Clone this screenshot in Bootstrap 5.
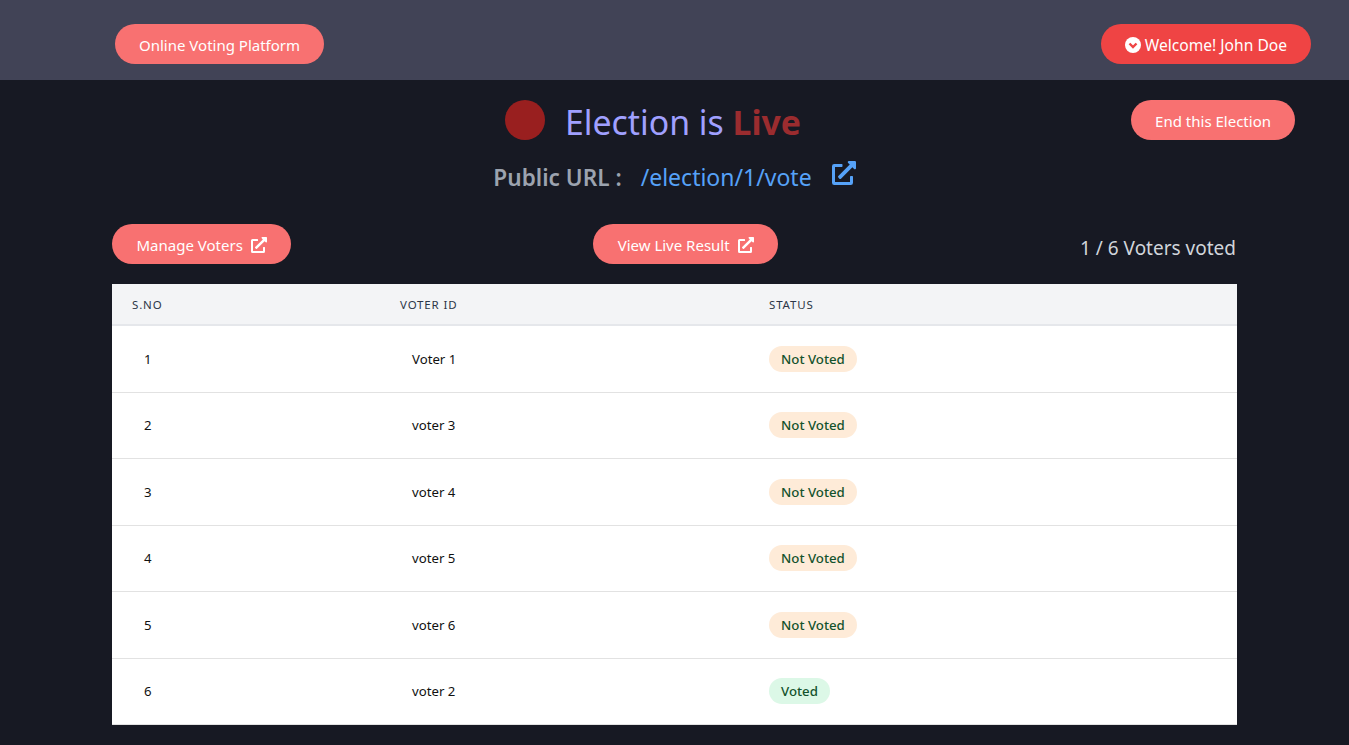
<!DOCTYPE html>
<html lang="en">
  <head>
    <meta charset="UTF-8" />
    <meta name="viewport" content="width=device-width, initial-scale=1.0" />
    <title>Election</title>
    <link href="https://cdn.jsdelivr.net/npm/bootstrap@5.3.0/dist/css/bootstrap.min.css" rel="stylesheet" />
    <style>
      body {
        background: #171923;
        font-family: "Noto Sans", "Open Sans", sans-serif;
        min-height: 745px;
        overflow: hidden;
      }
      .top-bar {
        background: #414356;
        height: 80px;
        padding: 24px 38px 0 115px;
      }
      .pill-btn {
        background: #f87171;
        border: 0;
        border-radius: 20px;
        color: #fff;
        font-size: 15px;
        height: 40px;
        line-height: 42px;
        padding: 0 24px;
        text-decoration: none;
        white-space: nowrap;
      }
      .pill-btn:hover {
        background: #f87171;
        color: #fff;
      }
      .pill-strong {
        background: #ef4444;
        font-size: 15.6px;
      }
      .pill-btn svg {
        width: 16px;
        height: 16px;
        fill: #fff;
      }
      .title-row {
        padding: 20px 54px 0 505px;
        height: 60px;
      }
      .live-dot {
        background: #991f1f;
        border-radius: 50%;
        width: 40px;
        height: 40px;
        margin-right: 20px;
      }
      .live-title {
        color: #a0a0ff;
        font-size: 33.8px;
        line-height: 40px;
        margin: 0;
        padding-top: 2px;
        font-weight: 400;
      }
      .live-title b {
        color: #9b2c2f;
        font-weight: 700;
      }
      .url-row {
        font-size: 22.6px;
        height: 30px;
        margin-top: 22px;
      }
      .url-label {
        color: #9ca3af;
        font-weight: 600;
        padding-top: 1px;
      }
      .url-link {
        color: #56a2f8;
        font-size: 23px;
        margin-left: 3px;
        text-decoration: none;
      }
      .url-row svg {
        width: 24px;
        height: 24px;
        fill: #56a2f8;
        margin-bottom: 8px;
      }
      .action-row {
        margin-top: 32px;
      }
      .action-row .pill-btn {
        padding: 0 24.5px;
      }
      .main-wrap {
        width: 1125px;
        margin-left: 112px;
      }
      .voters-count {
        color: #d1d5db;
        font-size: 19px;
        padding: 10px 1px 0 0;
      }
      .voter-table {
        table-layout: fixed;
        margin: 20px 0 0;
        font-size: 13.2px;
        background: #fff;
      }
      .voter-table th {
        background: #f3f4f6;
        color: #2d3748;
        font-size: 11.5px;
        font-weight: 400;
        letter-spacing: 0.85px;
        padding: 12px 20px;
        line-height: 15px;
        border-bottom: 2px solid #e5e7eb;
        height: 41px;
      }
      .voter-table td {
        color: #111;
        padding: 19.75px 20px;
        vertical-align: middle;
        border-bottom: 1px solid #e2e2e2;
        line-height: 26px;
      }
      .voter-table td.cell-pad {
        padding-left: 32px;
      }
      .state-pill {
        display: block;
        width: fit-content;
        border-radius: 13px;
        height: 26px;
        line-height: 26px;
        padding: 0 12.5px 0 12px;
        color: #14532d;
        font-size: 13.25px;
        font-weight: 500;
      }
      .state-no {
        background: #feebd8;
      }
      .state-yes {
        background: #dcf8e7;
      }
    </style>
  </head>
  <body>
    <nav class="top-bar d-flex justify-content-between align-items-start">
      <a class="pill-btn" href="#">Online Voting Platform</a>
      <a class="pill-btn pill-strong" href="#">
        <svg viewBox="0 0 16 16" class="align-middle mb-1"><circle cx="8" cy="8" r="8" /><path d="M4.5 6.5 8 10l3.5-3.5" fill="none" stroke="#ef4444" stroke-width="2.4" /></svg>
        Welcome! John Doe
      </a>
    </nav>

    <div class="title-row d-flex justify-content-between align-items-start">
      <div class="d-flex align-items-start">
        <div class="live-dot"></div>
        <h1 class="live-title">Election is <b>Live</b></h1>
      </div>
      <a class="pill-btn" href="#">End this Election</a>
    </div>

    <div class="url-row d-flex justify-content-center align-items-center gap-3">
      <span class="url-label">Public URL :</span>
      <a class="url-link" href="#">/election/1/vote</a>
      <svg viewBox="0 0 512 512" class="ms-1"><path d="M432,320H400a16,16,0,0,0-16,16V448H64V128H208a16,16,0,0,0,16-16V80a16,16,0,0,0-16-16H48A48,48,0,0,0,0,112V464a48,48,0,0,0,48,48H400a48,48,0,0,0,48-48V336A16,16,0,0,0,432,320ZM488,0h-128c-21.37,0-32.05,25.91-17,41l35.73,35.73L135,320.37a24,24,0,0,0,0,34L157.67,377a24,24,0,0,0,34,0L435.28,133.32,471,169c15,15,41,4.5,41-17V24A24,24,0,0,0,488,0Z" /></svg>
    </div>

    <div class="main-wrap">
      <div class="action-row d-flex justify-content-between">
        <a class="pill-btn" href="#">Manage Voters <svg viewBox="0 0 512 512" class="ms-1 mb-1"><path d="M432,320H400a16,16,0,0,0-16,16V448H64V128H208a16,16,0,0,0,16-16V80a16,16,0,0,0-16-16H48A48,48,0,0,0,0,112V464a48,48,0,0,0,48,48H400a48,48,0,0,0,48-48V336A16,16,0,0,0,432,320ZM488,0h-128c-21.37,0-32.05,25.91-17,41l35.73,35.73L135,320.37a24,24,0,0,0,0,34L157.67,377a24,24,0,0,0,34,0L435.28,133.32,471,169c15,15,41,4.5,41-17V24A24,24,0,0,0,488,0Z" /></svg></a>
        <a class="pill-btn" href="#">View Live Result <svg viewBox="0 0 512 512" class="ms-1 mb-1"><path d="M432,320H400a16,16,0,0,0-16,16V448H64V128H208a16,16,0,0,0,16-16V80a16,16,0,0,0-16-16H48A48,48,0,0,0,0,112V464a48,48,0,0,0,48,48H400a48,48,0,0,0,48-48V336A16,16,0,0,0,432,320ZM488,0h-128c-21.37,0-32.05,25.91-17,41l35.73,35.73L135,320.37a24,24,0,0,0,0,34L157.67,377a24,24,0,0,0,34,0L435.28,133.32,471,169c15,15,41,4.5,41-17V24A24,24,0,0,0,488,0Z" /></svg></a>
        <div class="voters-count">1 / 6 Voters voted</div>
      </div>

      <table class="table voter-table">
        <colgroup>
          <col style="width: 268px" />
          <col style="width: 369px" />
          <col />
        </colgroup>
        <thead>
          <tr><th>S.NO</th><th>VOTER ID</th><th>STATUS</th></tr>
        </thead>
        <tbody>
          <tr><td class="cell-pad">1</td><td class="cell-pad">Voter 1</td><td><span class="state-pill state-no">Not Voted</span></td></tr>
          <tr><td class="cell-pad">2</td><td class="cell-pad">voter 3</td><td><span class="state-pill state-no">Not Voted</span></td></tr>
          <tr><td class="cell-pad">3</td><td class="cell-pad">voter 4</td><td><span class="state-pill state-no">Not Voted</span></td></tr>
          <tr><td class="cell-pad">4</td><td class="cell-pad">voter 5</td><td><span class="state-pill state-no">Not Voted</span></td></tr>
          <tr><td class="cell-pad">5</td><td class="cell-pad">voter 6</td><td><span class="state-pill state-no">Not Voted</span></td></tr>
          <tr><td class="cell-pad">6</td><td class="cell-pad">voter 2</td><td><span class="state-pill state-yes">Voted</span></td></tr>
        </tbody>
      </table>
    </div>

    <script src="https://cdn.jsdelivr.net/npm/bootstrap@5.3.0/dist/js/bootstrap.bundle.min.js"></script>
  </body>
</html>
